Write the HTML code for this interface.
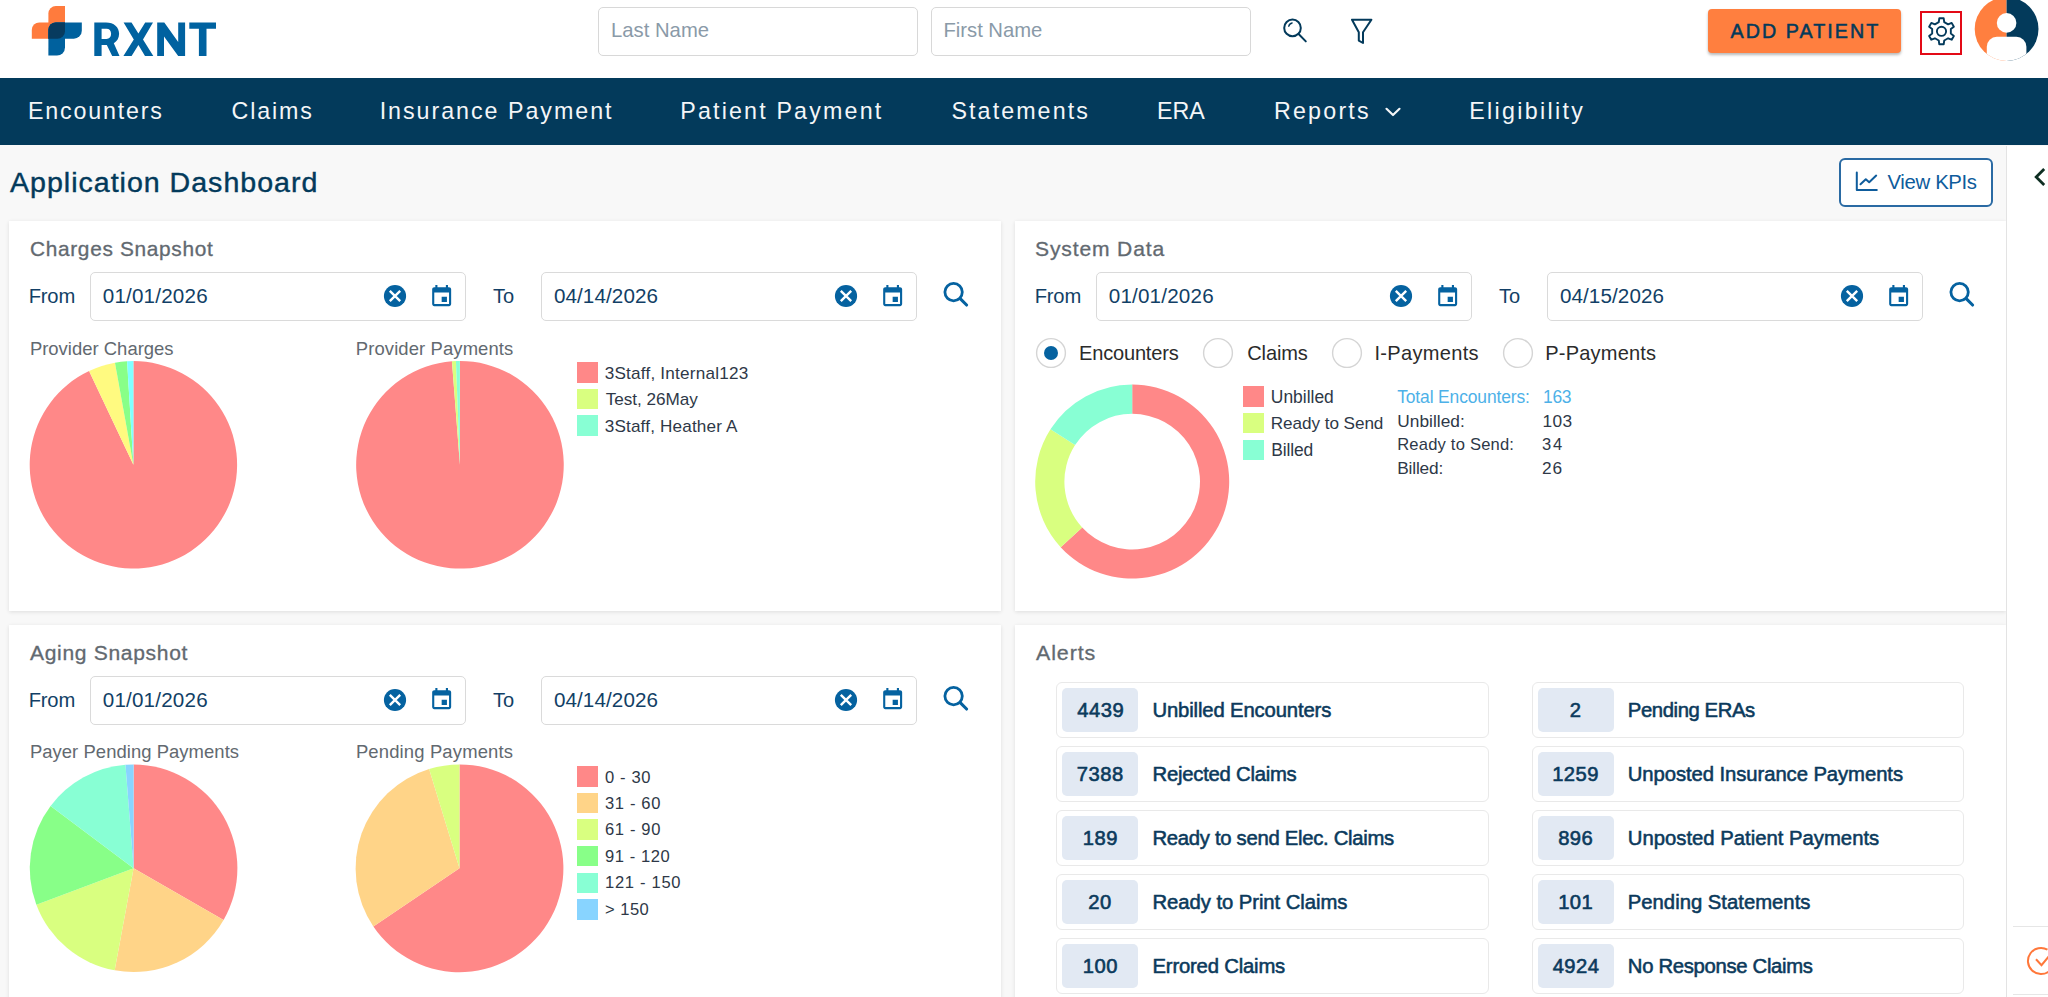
<!DOCTYPE html>
<html><head><meta charset="utf-8"><title>RXNT Application Dashboard</title>
<style>
html,body{margin:0;padding:0}
body{width:2048px;height:997px;overflow:hidden;position:relative;background:#F8F8F8;font-family:"Liberation Sans", sans-serif}
.t{position:absolute;white-space:nowrap;line-height:1}
</style></head><body>
<div style="position:absolute;left:0;top:0;width:2048px;height:78px;background:#fff"></div>
<svg style="position:absolute;left:0;top:0" width="240" height="70" viewBox="0 0 240 70">
<path d="M48.4 38.7 V13.5 a7.5 7.5 0 0 1 7.5 -7.5 H65 V31.2 a7.5 7.5 0 0 1 -7.5 7.5 Z" fill="#FF7B3D"/>
<path d="M31.8 38.7 V29.9 a7.5 7.5 0 0 1 7.5 -7.5 H65 V31.2 a7.5 7.5 0 0 1 -7.5 7.5 Z" fill="#FF7B3D"/>
<path d="M48.4 29.9 a7.5 7.5 0 0 1 7.5 -7.5 H81.8 V30.7 a8 8 0 0 1 -8 8 H48.4 Z" fill="#00619E"/>
<path d="M48.4 29.9 a7.5 7.5 0 0 1 7.5 -7.5 H65 V47.5 a8 8 0 0 1 -8 8 H48.4 Z" fill="#00619E"/>
<path d="M48.4 38.7 V29.9 a7.5 7.5 0 0 1 7.5 -7.5 H65 V31.2 a7.5 7.5 0 0 1 -7.5 7.5 Z" fill="#073B5F"/>
</svg>
<svg style="position:absolute;left:0;top:0" width="240" height="70" viewBox="0 0 240 70"><g fill="#0062A0" fill-rule="evenodd">
<path d="M94.3 22.4 H106 C114 22.4 119.1 27 119.1 33.8 C119.1 38.2 117 41.4 113.8 43.2 L119.5 56 H112.2 L106.8 45 H101.6 V56 H94.3 Z M101.6 28.7 V38.9 H106.5 C109.3 38.9 111.1 37 111.1 33.8 C111.1 30.6 109.3 28.7 106.5 28.7 Z"/>
<path d="M123.6 22.4 H131.5 L138.4 33.6 L145.2 22.4 H153 L143 39.6 L153.3 56 H145 L138.4 45 L131.6 56 H123.4 L133.8 39.6 Z"/>
<path d="M157.2 22.4 H164.3 L178.2 41.9 V22.4 H185.1 V56 H178.2 L164 36.4 V56 H157.2 Z"/>
<path d="M189.3 22.4 H216 V28.8 H206.5 V56 H198.9 V28.8 H189.3 Z"/>
</g></svg>
<div style="position:absolute;left:598px;top:7px;width:318.3px;height:47px;border:1px solid #D8D8D8;border-radius:5px;background:#fff"></div>
<div style="position:absolute;left:930.7px;top:7px;width:318.3px;height:47px;border:1px solid #D8D8D8;border-radius:5px;background:#fff"></div>
<svg style="position:absolute;left:1276px;top:12px" width="40" height="40" viewBox="1276 12 40 40">
<circle cx="1292.5" cy="27.9" r="8.3" fill="none" stroke="#033A5B" stroke-width="2"/>
<path d="M1288.8 26.2 a4.2 4.2 0 0 1 3.3 -3.2" fill="none" stroke="#033A5B" stroke-width="1.4" stroke-linecap="round"/>
<path d="M1298.6 34 L1305.8 41.4" stroke="#033A5B" stroke-width="2" stroke-linecap="round"/>
</svg>
<svg style="position:absolute;left:1345px;top:12px" width="35" height="40" viewBox="1345 12 35 40">
<path d="M1352 19.7 H1371.4 L1363 32.3 V43 L1358.8 40.6 V32.3 Z" fill="none" stroke="#033A5B" stroke-width="2" stroke-linejoin="round"/>
</svg>
<div style="position:absolute;left:1708px;top:9px;width:193px;height:44px;background:#FF7F3F;border-radius:4px;box-shadow:0 2px 3px rgba(0,0,0,0.28)"></div>
<div style="position:absolute;left:1920px;top:11px;width:38px;height:39.5px;border:2px solid #E30A17"></div>
<svg style="position:absolute;left:1920px;top:11px" width="42" height="44" viewBox="1920 11 42 44">
<path d="M1938.77 22.10 L1939.30 18.28 L1943.70 18.28 L1944.23 22.10 L1948.11 24.34 L1951.67 22.89 L1953.87 26.70 L1950.83 29.06 L1950.83 33.54 L1953.87 35.90 L1951.67 39.71 L1948.11 38.26 L1944.23 40.50 L1943.70 44.32 L1939.30 44.32 L1938.77 40.50 L1934.89 38.26 L1931.33 39.71 L1929.13 35.90 L1932.17 33.54 L1932.17 29.06 L1929.13 26.70 L1931.33 22.89 L1934.89 24.34 Z" fill="none" stroke="#033A5B" stroke-width="1.9" stroke-linejoin="round"/>
<circle cx="1941.5" cy="31.3" r="4.6" fill="none" stroke="#033A5B" stroke-width="1.9"/>
</svg>
<svg style="position:absolute;left:1970px;top:0px" width="78" height="66" viewBox="1970 0 78 66">
<defs><clipPath id="av"><circle cx="2006.6" cy="29" r="31.9"/></clipPath></defs>
<g clip-path="url(#av)">
<rect x="1970" y="-5" width="36.6" height="70" fill="#FF7F3F"/>
<rect x="2006.6" y="-5" width="40" height="70" fill="#033A5B"/>
<circle cx="2006.6" cy="22.9" r="9.8" fill="#fff"/>
<path d="M1986.8 70 V46.8 a10 10 0 0 1 10 -10 H2016.4 a10 10 0 0 1 10 10 V70 Z" fill="#fff"/>
</g></svg>
<div style="position:absolute;left:0;top:78px;width:2048px;height:66.5px;background:#033A5B"></div>
<svg style="position:absolute;left:1380px;top:100px" width="26" height="24" viewBox="1380 100 26 24"><path d="M1386.5 108.8 L1393 115 L1399.5 108.8" fill="none" stroke="#F4F6F8" stroke-width="2.2" stroke-linecap="round" stroke-linejoin="round"/></svg>
<div style="position:absolute;left:1839px;top:158px;width:150px;height:45px;border:2px solid #2A6AA3;border-radius:6px;background:#fff"></div>
<svg style="position:absolute;left:1850px;top:166px" width="34" height="32" viewBox="1850 166 34 32">
<path d="M1856.8 172.6 V190 H1876.8" fill="none" stroke="#0E5C9C" stroke-width="2" stroke-linecap="round" stroke-linejoin="round"/>
<path d="M1860.5 184.2 L1865.8 179.2 L1869.2 182.2 L1876.2 175.6" fill="none" stroke="#0E5C9C" stroke-width="2" stroke-linecap="round" stroke-linejoin="round"/>
</svg>
<div style="position:absolute;left:2006px;top:146px;width:42px;height:851px;background:#fff;border-left:1.6px solid #E3E3E3"></div>
<svg style="position:absolute;left:2028px;top:164px" width="20" height="26" viewBox="2028 164 20 26"><path d="M2043.2 170 L2036.2 177 L2043.2 184" fill="none" stroke="#0E2E22" stroke-width="2.8" stroke-linecap="square"/></svg>
<div style="position:absolute;left:2013px;top:925.8px;width:35px;height:1.5px;background:#E6E6E6"></div>
<div style="position:absolute;left:2013px;top:993.5px;width:35px;height:1.5px;background:#E6E6E6"></div>
<svg style="position:absolute;left:2020px;top:940px" width="28" height="40" viewBox="2020 940 28 40">
<path d="M2048 950.5 A13 13 0 1 0 2048 970.5" fill="none" stroke="#FF6A2A" stroke-width="1.9"/>
<path d="M2035.5 959.2 L2041.3 965.4 L2050 955" fill="none" stroke="#FF6A2A" stroke-width="1.9"/>
</svg>
<div style="position:absolute;left:9px;top:221px;width:992px;height:390px;background:#fff;box-shadow:0 1px 4px rgba(0,0,0,0.11)"></div>
<div style="position:absolute;left:1015px;top:221px;width:991px;height:390px;background:#fff;box-shadow:0 1px 4px rgba(0,0,0,0.11)"></div>
<div style="position:absolute;left:9px;top:625px;width:992px;height:385px;background:#fff;box-shadow:0 1px 4px rgba(0,0,0,0.11)"></div>
<div style="position:absolute;left:1015px;top:625px;width:991px;height:385px;background:#fff;box-shadow:0 1px 4px rgba(0,0,0,0.11)"></div>
<div style="position:absolute;left:2006px;top:146px;width:42px;height:851px;background:#fff;border-left:1.6px solid #E3E3E3"></div>
<svg style="position:absolute;left:2028px;top:164px" width="20" height="26" viewBox="2028 164 20 26"><path d="M2043.2 170 L2036.2 177 L2043.2 184" fill="none" stroke="#0E2E22" stroke-width="2.8" stroke-linecap="square"/></svg>
<div style="position:absolute;left:2013px;top:925.8px;width:35px;height:1.5px;background:#E6E6E6"></div>
<div style="position:absolute;left:2013px;top:993.5px;width:35px;height:1.5px;background:#E6E6E6"></div>
<svg style="position:absolute;left:2020px;top:940px" width="28" height="40" viewBox="2020 940 28 40">
<path d="M2047.5 949.6 A13.1 13.1 0 1 0 2049.5 971" fill="none" stroke="#FF773A" stroke-width="2"/>
<path d="M2036 959.2 L2041.5 965.2 L2050 955" fill="none" stroke="#FF773A" stroke-width="2"/>
</svg>
<div style="position:absolute;left:89.8px;top:272.0px;width:374.2px;height:47px;border:1.2px solid #DADADA;border-radius:5px;background:#fff"></div>
<svg style="position:absolute;left:381.60px;top:283.00px" width="26" height="26" viewBox="381.60 283.00 26 26"><circle cx="394.60" cy="296.00" r="11.1" fill="#0562A0"/><path d="M389.40 290.80 L399.80 301.20 M399.80 290.80 L389.40 301.20" stroke="#fff" stroke-width="2.4"/></svg>
<svg style="position:absolute;left:429.23px;top:283.75px;overflow:visible" width="25.32" height="25.32" viewBox="0 0 24 24"><path d="M17 12h-5v5h5v-5zM16 1v2H8V1H6v2H5c-1.11 0-1.99.9-1.99 2L3 19c0 1.1.89 2 2 2h14c1.1 0 2-.9 2-2V5c0-1.1-.9-2-2-2h-1V1h-2zm3 18H5V8h14v11z" fill="#0562A0"/></svg>
<div style="position:absolute;left:540.6px;top:272.0px;width:374.6px;height:47px;border:1.2px solid #DADADA;border-radius:5px;background:#fff"></div>
<svg style="position:absolute;left:832.90px;top:283.00px" width="26" height="26" viewBox="832.90 283.00 26 26"><circle cx="845.90" cy="296.00" r="11.1" fill="#0562A0"/><path d="M840.70 290.80 L851.10 301.20 M851.10 290.80 L840.70 301.20" stroke="#fff" stroke-width="2.4"/></svg>
<svg style="position:absolute;left:879.84px;top:283.75px;overflow:visible" width="25.32" height="25.32" viewBox="0 0 24 24"><path d="M17 12h-5v5h5v-5zM16 1v2H8V1H6v2H5c-1.11 0-1.99.9-1.99 2L3 19c0 1.1.89 2 2 2h14c1.1 0 2-.9 2-2V5c0-1.1-.9-2-2-2h-1V1h-2zm3 18H5V8h14v11z" fill="#0562A0"/></svg>
<svg style="position:absolute;left:935px;top:275px" width="40" height="40" viewBox="935 275 40 40">
<circle cx="953.6" cy="292.1" r="8.7" fill="none" stroke="#0562A0" stroke-width="2.8"/>
<path d="M960.2 298.6 L966.6 305" stroke="#0562A0" stroke-width="3.1" stroke-linecap="round"/></svg>
<div style="position:absolute;left:1095.8px;top:272.0px;width:374.2px;height:47px;border:1.2px solid #DADADA;border-radius:5px;background:#fff"></div>
<svg style="position:absolute;left:1387.60px;top:283.00px" width="26" height="26" viewBox="1387.60 283.00 26 26"><circle cx="1400.60" cy="296.00" r="11.1" fill="#0562A0"/><path d="M1395.40 290.80 L1405.80 301.20 M1405.80 290.80 L1395.40 301.20" stroke="#fff" stroke-width="2.4"/></svg>
<svg style="position:absolute;left:1435.24px;top:283.75px;overflow:visible" width="25.32" height="25.32" viewBox="0 0 24 24"><path d="M17 12h-5v5h5v-5zM16 1v2H8V1H6v2H5c-1.11 0-1.99.9-1.99 2L3 19c0 1.1.89 2 2 2h14c1.1 0 2-.9 2-2V5c0-1.1-.9-2-2-2h-1V1h-2zm3 18H5V8h14v11z" fill="#0562A0"/></svg>
<div style="position:absolute;left:1546.6px;top:272.0px;width:374.6px;height:47px;border:1.2px solid #DADADA;border-radius:5px;background:#fff"></div>
<svg style="position:absolute;left:1838.90px;top:283.00px" width="26" height="26" viewBox="1838.90 283.00 26 26"><circle cx="1851.90" cy="296.00" r="11.1" fill="#0562A0"/><path d="M1846.70 290.80 L1857.10 301.20 M1857.10 290.80 L1846.70 301.20" stroke="#fff" stroke-width="2.4"/></svg>
<svg style="position:absolute;left:1885.84px;top:283.75px;overflow:visible" width="25.32" height="25.32" viewBox="0 0 24 24"><path d="M17 12h-5v5h5v-5zM16 1v2H8V1H6v2H5c-1.11 0-1.99.9-1.99 2L3 19c0 1.1.89 2 2 2h14c1.1 0 2-.9 2-2V5c0-1.1-.9-2-2-2h-1V1h-2zm3 18H5V8h14v11z" fill="#0562A0"/></svg>
<svg style="position:absolute;left:1941px;top:275px" width="40" height="40" viewBox="935 275 40 40">
<circle cx="953.6" cy="292.1" r="8.7" fill="none" stroke="#0562A0" stroke-width="2.8"/>
<path d="M960.2 298.6 L966.6 305" stroke="#0562A0" stroke-width="3.1" stroke-linecap="round"/></svg>
<div style="position:absolute;left:89.8px;top:675.7px;width:374.2px;height:47px;border:1.2px solid #DADADA;border-radius:5px;background:#fff"></div>
<svg style="position:absolute;left:381.60px;top:686.70px" width="26" height="26" viewBox="381.60 686.70 26 26"><circle cx="394.60" cy="699.70" r="11.1" fill="#0562A0"/><path d="M389.40 694.50 L399.80 704.90 M399.80 694.50 L389.40 704.90" stroke="#fff" stroke-width="2.4"/></svg>
<svg style="position:absolute;left:429.23px;top:687.45px;overflow:visible" width="25.32" height="25.32" viewBox="0 0 24 24"><path d="M17 12h-5v5h5v-5zM16 1v2H8V1H6v2H5c-1.11 0-1.99.9-1.99 2L3 19c0 1.1.89 2 2 2h14c1.1 0 2-.9 2-2V5c0-1.1-.9-2-2-2h-1V1h-2zm3 18H5V8h14v11z" fill="#0562A0"/></svg>
<div style="position:absolute;left:540.6px;top:675.7px;width:374.6px;height:47px;border:1.2px solid #DADADA;border-radius:5px;background:#fff"></div>
<svg style="position:absolute;left:832.90px;top:686.70px" width="26" height="26" viewBox="832.90 686.70 26 26"><circle cx="845.90" cy="699.70" r="11.1" fill="#0562A0"/><path d="M840.70 694.50 L851.10 704.90 M851.10 694.50 L840.70 704.90" stroke="#fff" stroke-width="2.4"/></svg>
<svg style="position:absolute;left:879.84px;top:687.45px;overflow:visible" width="25.32" height="25.32" viewBox="0 0 24 24"><path d="M17 12h-5v5h5v-5zM16 1v2H8V1H6v2H5c-1.11 0-1.99.9-1.99 2L3 19c0 1.1.89 2 2 2h14c1.1 0 2-.9 2-2V5c0-1.1-.9-2-2-2h-1V1h-2zm3 18H5V8h14v11z" fill="#0562A0"/></svg>
<svg style="position:absolute;left:935px;top:678.7px" width="40" height="40" viewBox="935 275 40 40">
<circle cx="953.6" cy="292.1" r="8.7" fill="none" stroke="#0562A0" stroke-width="2.8"/>
<path d="M960.2 298.6 L966.6 305" stroke="#0562A0" stroke-width="3.1" stroke-linecap="round"/></svg>
<svg style="position:absolute;left:0;top:0" width="2048" height="997" viewBox="0 0 2048 997">
<path d="M133.40 464.80 L133.40 361.10 A103.7 103.7 0 1 1 89.08 371.05 Z" fill="#FF8888"/>
<path d="M133.40 464.80 L89.08 371.05 A103.7 103.7 0 0 1 114.95 362.75 Z" fill="#FFFA80"/>
<path d="M133.40 464.80 L114.95 362.75 A103.7 103.7 0 0 1 127.07 361.29 Z" fill="#88FF88"/>
<path d="M133.40 464.80 L127.07 361.29 A103.7 103.7 0 0 1 133.40 361.10 Z" fill="#80FFFF"/>
<path d="M459.90 464.80 L459.90 361.00 A103.8 103.8 0 1 1 451.94 361.31 Z" fill="#FF8888"/>
<path d="M459.90 464.80 L451.94 361.31 A103.8 103.8 0 0 1 455.92 361.08 Z" fill="#D9FF80"/>
<path d="M459.90 464.80 L455.92 361.08 A103.8 103.8 0 0 1 459.90 361.00 Z" fill="#88FFD4"/>
<path d="M1132.20 413.80 L1132.20 384.60 A97 97 0 1 1 1060.68 547.13 L1082.21 527.41 A67.8 67.8 0 1 0 1132.20 413.80 Z" fill="#FF8888"/>
<path d="M1082.21 527.41 L1060.68 547.13 A97 97 0 0 1 1050.48 429.34 L1075.08 445.07 A67.8 67.8 0 0 0 1082.21 527.41 Z" fill="#D9FF80"/>
<path d="M1075.08 445.07 L1050.48 429.34 A97 97 0 0 1 1132.20 384.60 L1132.20 413.80 A67.8 67.8 0 0 0 1075.08 445.07 Z" fill="#88FFD4"/>
<path d="M133.60 868.30 L133.60 764.50 A103.8 103.8 0 0 1 223.58 920.04 Z" fill="#FF8888"/>
<path d="M133.60 868.30 L223.58 920.04 A103.8 103.8 0 0 1 114.68 970.36 Z" fill="#FFD488"/>
<path d="M133.60 868.30 L114.68 970.36 A103.8 103.8 0 0 1 36.37 904.65 Z" fill="#D9FF80"/>
<path d="M133.60 868.30 L36.37 904.65 A103.8 103.8 0 0 1 50.59 805.98 Z" fill="#88FF88"/>
<path d="M133.60 868.30 L50.59 805.98 A103.8 103.8 0 0 1 125.46 764.82 Z" fill="#88FFD4"/>
<path d="M133.60 868.30 L125.46 764.82 A103.8 103.8 0 0 1 133.60 764.50 Z" fill="#88D4FF"/>
<path d="M459.50 868.30 L459.50 764.40 A103.9 103.9 0 1 1 373.36 926.40 Z" fill="#FF8888"/>
<path d="M459.50 868.30 L373.36 926.40 A103.9 103.9 0 0 1 429.12 768.94 Z" fill="#FFD488"/>
<path d="M459.50 868.30 L429.12 768.94 A103.9 103.9 0 0 1 459.50 764.40 Z" fill="#D9FF80"/>
</svg>
<div style="position:absolute;left:577.2px;top:362.0px;width:20.8px;height:20.6px;background:#FF8888"></div>
<div style="position:absolute;left:577.2px;top:388.65px;width:20.8px;height:20.6px;background:#D9FF80"></div>
<div style="position:absolute;left:577.2px;top:415.3px;width:20.8px;height:20.6px;background:#88FFD4"></div>
<div style="position:absolute;left:577.2px;top:766.1px;width:20.9px;height:20.6px;background:#FF8888"></div>
<div style="position:absolute;left:577.2px;top:792.7px;width:20.9px;height:20.6px;background:#FFD488"></div>
<div style="position:absolute;left:577.2px;top:819.3000000000001px;width:20.9px;height:20.6px;background:#D9FF80"></div>
<div style="position:absolute;left:577.2px;top:845.9000000000001px;width:20.9px;height:20.6px;background:#88FF88"></div>
<div style="position:absolute;left:577.2px;top:872.5px;width:20.9px;height:20.6px;background:#88FFD4"></div>
<div style="position:absolute;left:577.2px;top:899.1px;width:20.9px;height:20.6px;background:#88D4FF"></div>
<div style="position:absolute;left:1243.2px;top:386.1px;width:20.6px;height:20.6px;background:#FF8888"></div>
<div style="position:absolute;left:1243.2px;top:412.90000000000003px;width:20.6px;height:20.6px;background:#D9FF80"></div>
<div style="position:absolute;left:1243.2px;top:439.70000000000005px;width:20.6px;height:20.6px;background:#88FFD4"></div>
<svg style="position:absolute;left:1032.7px;top:335px" width="36" height="36" viewBox="1032.7 335 36 36"><circle cx="1050.7" cy="353" r="14.4" fill="#fff" stroke="#D5D5D5" stroke-width="1.4"/><circle cx="1050.7" cy="353" r="7" fill="#0562A0"/></svg>
<svg style="position:absolute;left:1200.2px;top:335px" width="36" height="36" viewBox="1200.2 335 36 36"><circle cx="1218.2" cy="353" r="14.4" fill="#fff" stroke="#D5D5D5" stroke-width="1.4"/></svg>
<svg style="position:absolute;left:1329.2px;top:335px" width="36" height="36" viewBox="1329.2 335 36 36"><circle cx="1347.2" cy="353" r="14.4" fill="#fff" stroke="#D5D5D5" stroke-width="1.4"/></svg>
<svg style="position:absolute;left:1499.5px;top:335px" width="36" height="36" viewBox="1499.5 335 36 36"><circle cx="1517.5" cy="353" r="14.4" fill="#fff" stroke="#D5D5D5" stroke-width="1.4"/></svg>
<div style="position:absolute;left:1056.2px;top:682.0px;width:430.4px;height:54px;border:1.5px solid #E9E9E9;border-radius:6px;background:#fff"></div>
<div style="position:absolute;left:1062.2px;top:688.0px;width:76.3px;height:44.2px;border-radius:5px;background:#E2E9F3"></div>
<div style="position:absolute;left:1056.2px;top:745.9px;width:430.4px;height:54px;border:1.5px solid #E9E9E9;border-radius:6px;background:#fff"></div>
<div style="position:absolute;left:1062.2px;top:751.9px;width:76.3px;height:44.2px;border-radius:5px;background:#E2E9F3"></div>
<div style="position:absolute;left:1056.2px;top:809.8px;width:430.4px;height:54px;border:1.5px solid #E9E9E9;border-radius:6px;background:#fff"></div>
<div style="position:absolute;left:1062.2px;top:815.8px;width:76.3px;height:44.2px;border-radius:5px;background:#E2E9F3"></div>
<div style="position:absolute;left:1056.2px;top:873.7px;width:430.4px;height:54px;border:1.5px solid #E9E9E9;border-radius:6px;background:#fff"></div>
<div style="position:absolute;left:1062.2px;top:879.7px;width:76.3px;height:44.2px;border-radius:5px;background:#E2E9F3"></div>
<div style="position:absolute;left:1056.2px;top:937.6px;width:430.4px;height:54px;border:1.5px solid #E9E9E9;border-radius:6px;background:#fff"></div>
<div style="position:absolute;left:1062.2px;top:943.6px;width:76.3px;height:44.2px;border-radius:5px;background:#E2E9F3"></div>
<div style="position:absolute;left:1531.5px;top:682.0px;width:430.3px;height:54px;border:1.5px solid #E9E9E9;border-radius:6px;background:#fff"></div>
<div style="position:absolute;left:1537.5px;top:688.0px;width:76.3px;height:44.2px;border-radius:5px;background:#E2E9F3"></div>
<div style="position:absolute;left:1531.5px;top:745.9px;width:430.3px;height:54px;border:1.5px solid #E9E9E9;border-radius:6px;background:#fff"></div>
<div style="position:absolute;left:1537.5px;top:751.9px;width:76.3px;height:44.2px;border-radius:5px;background:#E2E9F3"></div>
<div style="position:absolute;left:1531.5px;top:809.8px;width:430.3px;height:54px;border:1.5px solid #E9E9E9;border-radius:6px;background:#fff"></div>
<div style="position:absolute;left:1537.5px;top:815.8px;width:76.3px;height:44.2px;border-radius:5px;background:#E2E9F3"></div>
<div style="position:absolute;left:1531.5px;top:873.7px;width:430.3px;height:54px;border:1.5px solid #E9E9E9;border-radius:6px;background:#fff"></div>
<div style="position:absolute;left:1537.5px;top:879.7px;width:76.3px;height:44.2px;border-radius:5px;background:#E2E9F3"></div>
<div style="position:absolute;left:1531.5px;top:937.6px;width:430.3px;height:54px;border:1.5px solid #E9E9E9;border-radius:6px;background:#fff"></div>
<div style="position:absolute;left:1537.5px;top:943.6px;width:76.3px;height:44.2px;border-radius:5px;background:#E2E9F3"></div>
<div class="t" style="left:611.10px;top:20px;color:#8A9AA8;font-size:20.26px;font-weight:400;letter-spacing:0.000px;">Last Name</div>
<div class="t" style="left:943.50px;top:20px;color:#8A9AA8;font-size:20.26px;font-weight:400;letter-spacing:-0.022px;">First Name</div>
<div class="t" style="left:1730.50px;top:22px;color:#033A5B;font-size:19.69px;font-weight:400;letter-spacing:2.060px;-webkit-text-stroke:0.5px #033A5B;">ADD PATIENT</div>
<div class="t" style="left:28.00px;top:100px;color:#F4F6F8;font-size:23.26px;font-weight:400;letter-spacing:1.800px;">Encounters</div>
<div class="t" style="left:231.60px;top:100px;color:#F4F6F8;font-size:23.26px;font-weight:400;letter-spacing:1.860px;">Claims</div>
<div class="t" style="left:379.70px;top:100px;color:#F4F6F8;font-size:23.26px;font-weight:400;letter-spacing:1.969px;">Insurance Payment</div>
<div class="t" style="left:680.30px;top:100px;color:#F4F6F8;font-size:23.26px;font-weight:400;letter-spacing:2.164px;">Patient Payment</div>
<div class="t" style="left:951.50px;top:100px;color:#F4F6F8;font-size:23.26px;font-weight:400;letter-spacing:2.078px;">Statements</div>
<div class="t" style="left:1157.10px;top:100px;color:#F4F6F8;font-size:23.26px;font-weight:400;letter-spacing:-0.050px;">ERA</div>
<div class="t" style="left:1274.00px;top:100px;color:#F4F6F8;font-size:23.26px;font-weight:400;letter-spacing:2.200px;">Reports</div>
<div class="t" style="left:1469.30px;top:100px;color:#F4F6F8;font-size:23.26px;font-weight:400;letter-spacing:2.320px;">Eligibility</div>
<div class="t" style="left:9.70px;top:170px;color:#033A5B;font-size:26.74px;font-weight:400;letter-spacing:0.916px;-webkit-text-stroke:0.4px #033A5B;transform:scaleX(1.0696);transform-origin:0 0;">Application Dashboard</div>
<div class="t" style="left:1887.50px;top:172px;color:#0E5C9C;font-size:20.35px;font-weight:400;letter-spacing:-0.350px;">View KPIs</div>
<div class="t" style="left:29.90px;top:240px;color:#626970;font-size:19.48px;font-weight:400;letter-spacing:0.642px;-webkit-text-stroke:0.3px #626970;transform:scaleX(1.0692);transform-origin:0 0;">Charges Snapshot</div>
<div class="t" style="left:1035.15px;top:240px;color:#626970;font-size:19.48px;font-weight:400;letter-spacing:0.805px;-webkit-text-stroke:0.3px #626970;transform:scaleX(1.0811);transform-origin:0 0;">System Data</div>
<div class="t" style="left:30.10px;top:644px;color:#626970;font-size:19.77px;font-weight:400;letter-spacing:0.636px;-webkit-text-stroke:0.3px #626970;transform:scaleX(1.0644);transform-origin:0 0;">Aging Snapshot</div>
<div class="t" style="left:1036.05px;top:644px;color:#626970;font-size:19.48px;font-weight:400;letter-spacing:0.819px;-webkit-text-stroke:0.3px #626970;transform:scaleX(1.0995);transform-origin:0 0;">Alerts</div>
<div class="t" style="left:28.75px;top:286px;color:#123F66;font-size:20.20px;font-weight:400;letter-spacing:-0.217px;">From</div>
<div class="t" style="left:492.90px;top:286px;color:#123F66;font-size:20.06px;font-weight:400;letter-spacing:0.100px;">To</div>
<div class="t" style="left:102.76px;top:286px;color:#123F66;font-size:20.64px;font-weight:400;letter-spacing:0.180px;">01/01/2026</div>
<div class="t" style="left:553.90px;top:286px;color:#123F66;font-size:20.64px;font-weight:400;letter-spacing:0.100px;">04/14/2026</div>
<div class="t" style="left:1034.75px;top:286px;color:#123F66;font-size:20.20px;font-weight:400;letter-spacing:-0.217px;">From</div>
<div class="t" style="left:1498.90px;top:286px;color:#123F66;font-size:20.06px;font-weight:400;letter-spacing:0.100px;">To</div>
<div class="t" style="left:1108.76px;top:286px;color:#123F66;font-size:20.64px;font-weight:400;letter-spacing:0.180px;">01/01/2026</div>
<div class="t" style="left:1559.90px;top:286px;color:#123F66;font-size:20.64px;font-weight:400;letter-spacing:0.100px;">04/15/2026</div>
<div class="t" style="left:28.75px;top:690px;color:#123F66;font-size:20.20px;font-weight:400;letter-spacing:-0.217px;">From</div>
<div class="t" style="left:492.90px;top:690px;color:#123F66;font-size:20.06px;font-weight:400;letter-spacing:0.100px;">To</div>
<div class="t" style="left:102.76px;top:690px;color:#123F66;font-size:20.64px;font-weight:400;letter-spacing:0.180px;">01/01/2026</div>
<div class="t" style="left:553.90px;top:690px;color:#123F66;font-size:20.64px;font-weight:400;letter-spacing:0.100px;">04/14/2026</div>
<div class="t" style="left:29.90px;top:340px;color:#626970;font-size:18.46px;font-weight:400;letter-spacing:0.013px;">Provider Charges</div>
<div class="t" style="left:355.80px;top:340px;color:#626970;font-size:18.46px;font-weight:400;letter-spacing:0.109px;">Provider Payments</div>
<div class="t" style="left:29.90px;top:743px;color:#626970;font-size:18.46px;font-weight:400;letter-spacing:0.052px;">Payer Pending Payments</div>
<div class="t" style="left:355.90px;top:743px;color:#626970;font-size:18.46px;font-weight:400;letter-spacing:0.153px;">Pending Payments</div>
<div class="t" style="left:604.70px;top:365px;color:#2E3847;font-size:17.15px;font-weight:400;letter-spacing:0.206px;">3Staff, Internal123</div>
<div class="t" style="left:605.70px;top:391px;color:#2E3847;font-size:17.15px;font-weight:400;letter-spacing:-0.030px;">Test, 26May</div>
<div class="t" style="left:604.70px;top:418px;color:#2E3847;font-size:17.15px;font-weight:400;letter-spacing:0.162px;">3Staff, Heather A</div>
<div class="t" style="left:605.00px;top:770px;color:#2E3847;font-size:16.57px;font-weight:400;letter-spacing:0.620px;">0 - 30</div>
<div class="t" style="left:605.00px;top:796px;color:#2E3847;font-size:16.57px;font-weight:400;letter-spacing:0.633px;">31 - 60</div>
<div class="t" style="left:605.00px;top:822px;color:#2E3847;font-size:16.57px;font-weight:400;letter-spacing:0.633px;">61 - 90</div>
<div class="t" style="left:605.00px;top:849px;color:#2E3847;font-size:16.57px;font-weight:400;letter-spacing:0.557px;">91 - 120</div>
<div class="t" style="left:605.00px;top:875px;color:#2E3847;font-size:16.57px;font-weight:400;letter-spacing:0.688px;">121 - 150</div>
<div class="t" style="left:605.00px;top:902px;color:#2E3847;font-size:16.57px;font-weight:400;letter-spacing:0.475px;">&gt; 150</div>
<div class="t" style="left:1270.80px;top:389px;color:#2E3847;font-size:17.44px;font-weight:400;letter-spacing:0.000px;">Unbilled</div>
<div class="t" style="left:1270.80px;top:415px;color:#2E3847;font-size:17.15px;font-weight:400;letter-spacing:-0.067px;">Ready to Send</div>
<div class="t" style="left:1271.20px;top:442px;color:#2E3847;font-size:17.44px;font-weight:400;letter-spacing:-0.110px;">Billed</div>
<div class="t" style="left:1397.20px;top:389px;color:#4DB1E8;font-size:17.44px;font-weight:400;letter-spacing:-0.125px;">Total Encounters:</div>
<div class="t" style="left:1543.10px;top:389px;color:#4DB1E8;font-size:17.44px;font-weight:400;letter-spacing:-0.350px;">163</div>
<div class="t" style="left:1397.20px;top:413px;color:#2E3847;font-size:17.30px;font-weight:400;letter-spacing:0.050px;">Unbilled:</div>
<div class="t" style="left:1542.60px;top:413px;color:#2E3847;font-size:17.30px;font-weight:400;letter-spacing:0.400px;">103</div>
<div class="t" style="left:1397.20px;top:437px;color:#2E3847;font-size:16.57px;font-weight:400;letter-spacing:0.200px;">Ready to Send:</div>
<div class="t" style="left:1542.10px;top:437px;color:#2E3847;font-size:16.57px;font-weight:400;letter-spacing:1.800px;">34</div>
<div class="t" style="left:1397.20px;top:460px;color:#2E3847;font-size:17.30px;font-weight:400;letter-spacing:-0.167px;">Billed:</div>
<div class="t" style="left:1542.10px;top:460px;color:#2E3847;font-size:17.30px;font-weight:400;letter-spacing:0.800px;">26</div>
<div class="t" style="left:1079.00px;top:343px;color:#2B2B2B;font-size:20.06px;font-weight:400;letter-spacing:-0.189px;">Encounters</div>
<div class="t" style="left:1247.20px;top:343px;color:#2B2B2B;font-size:20.06px;font-weight:400;letter-spacing:-0.120px;">Claims</div>
<div class="t" style="left:1374.40px;top:343px;color:#2B2B2B;font-size:20.06px;font-weight:400;letter-spacing:0.311px;">I-Payments</div>
<div class="t" style="left:1545.30px;top:343px;color:#2B2B2B;font-size:20.06px;font-weight:400;letter-spacing:0.178px;">P-Payments</div>
<div class="t" style="left:1152.50px;top:700px;color:#0B3A5C;font-size:20.28px;font-weight:400;letter-spacing:-0.144px;-webkit-text-stroke:0.55px #0B3A5C;">Unbilled Encounters</div>
<div class="t" style="left:1077.35px;top:700px;color:#0B3A5C;font-size:20.20px;font-weight:400;letter-spacing:0.450px;-webkit-text-stroke:0.6px #0B3A5C;">4439</div>
<div class="t" style="left:1152.50px;top:764px;color:#0B3A5C;font-size:20.28px;font-weight:400;letter-spacing:-0.236px;-webkit-text-stroke:0.55px #0B3A5C;">Rejected Claims</div>
<div class="t" style="left:1076.85px;top:764px;color:#0B3A5C;font-size:20.20px;font-weight:400;letter-spacing:0.450px;-webkit-text-stroke:0.6px #0B3A5C;">7388</div>
<div class="t" style="left:1152.50px;top:828px;color:#0B3A5C;font-size:20.28px;font-weight:400;letter-spacing:-0.292px;-webkit-text-stroke:0.55px #0B3A5C;">Ready to send Elec. Claims</div>
<div class="t" style="left:1082.85px;top:828px;color:#0B3A5C;font-size:20.20px;font-weight:400;letter-spacing:0.450px;-webkit-text-stroke:0.6px #0B3A5C;">189</div>
<div class="t" style="left:1152.50px;top:892px;color:#0B3A5C;font-size:20.28px;font-weight:400;letter-spacing:-0.055px;-webkit-text-stroke:0.55px #0B3A5C;">Ready to Print Claims</div>
<div class="t" style="left:1088.35px;top:892px;color:#0B3A5C;font-size:20.20px;font-weight:400;letter-spacing:0.450px;-webkit-text-stroke:0.6px #0B3A5C;">20</div>
<div class="t" style="left:1152.50px;top:956px;color:#0B3A5C;font-size:20.28px;font-weight:400;letter-spacing:-0.185px;-webkit-text-stroke:0.55px #0B3A5C;">Errored Claims</div>
<div class="t" style="left:1082.85px;top:956px;color:#0B3A5C;font-size:20.20px;font-weight:400;letter-spacing:0.450px;-webkit-text-stroke:0.6px #0B3A5C;">100</div>
<div class="t" style="left:1627.80px;top:700px;color:#0B3A5C;font-size:20.28px;font-weight:400;letter-spacing:-0.400px;-webkit-text-stroke:0.55px #0B3A5C;">Pending ERAs</div>
<div class="t" style="left:1569.65px;top:700px;color:#0B3A5C;font-size:20.20px;font-weight:400;letter-spacing:0.450px;-webkit-text-stroke:0.6px #0B3A5C;">2</div>
<div class="t" style="left:1627.80px;top:764px;color:#0B3A5C;font-size:20.28px;font-weight:400;letter-spacing:-0.073px;-webkit-text-stroke:0.55px #0B3A5C;">Unposted Insurance Payments</div>
<div class="t" style="left:1552.15px;top:764px;color:#0B3A5C;font-size:20.20px;font-weight:400;letter-spacing:0.450px;-webkit-text-stroke:0.6px #0B3A5C;">1259</div>
<div class="t" style="left:1627.80px;top:828px;color:#0B3A5C;font-size:20.28px;font-weight:400;letter-spacing:0.008px;-webkit-text-stroke:0.55px #0B3A5C;">Unposted Patient Payments</div>
<div class="t" style="left:1558.15px;top:828px;color:#0B3A5C;font-size:20.20px;font-weight:400;letter-spacing:0.450px;-webkit-text-stroke:0.6px #0B3A5C;">896</div>
<div class="t" style="left:1627.80px;top:892px;color:#0B3A5C;font-size:20.28px;font-weight:400;letter-spacing:0.006px;-webkit-text-stroke:0.55px #0B3A5C;">Pending Statements</div>
<div class="t" style="left:1558.15px;top:892px;color:#0B3A5C;font-size:20.20px;font-weight:400;letter-spacing:0.450px;-webkit-text-stroke:0.6px #0B3A5C;">101</div>
<div class="t" style="left:1627.80px;top:956px;color:#0B3A5C;font-size:20.28px;font-weight:400;letter-spacing:-0.306px;-webkit-text-stroke:0.55px #0B3A5C;">No Response Claims</div>
<div class="t" style="left:1552.65px;top:956px;color:#0B3A5C;font-size:20.20px;font-weight:400;letter-spacing:0.450px;-webkit-text-stroke:0.6px #0B3A5C;">4924</div>
</body></html>
